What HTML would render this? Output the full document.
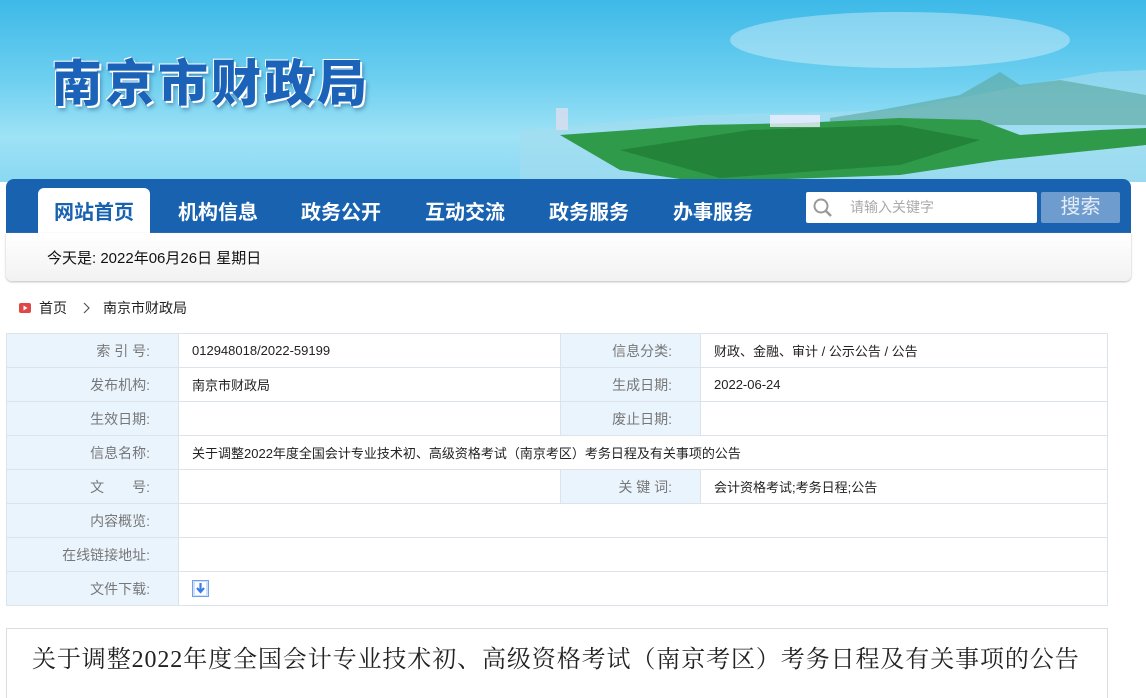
<!DOCTYPE html>
<html><head><meta charset="utf-8"><style>
*{margin:0;padding:0;box-sizing:border-box}
body{width:1146px;height:688px;overflow:hidden;background:#fff;font-family:"Liberation Sans","Noto Sans CJK SC",sans-serif;position:relative}
.banner{position:absolute;left:0;top:0;width:1146px;height:182px;background:linear-gradient(180deg,#3db9e8 0%,#6fd0f0 45%,#9ee2f6 75%,#8ad8f2 100%);overflow:hidden}
.logo{position:absolute;left:52px;top:44px;font-family:"Noto Sans CJK SC",sans-serif;font-weight:900;font-size:50px;color:#1b63b8;letter-spacing:3px;text-shadow:2px 2px 0 #fff,-1px -1px 0 #fff,3px 4px 4px rgba(0,40,100,.4)}
.nav{position:absolute;left:6px;top:179px;width:1125px;height:54px;background:#1862b0;border-radius:8px 8px 0 0}
.nav span{position:absolute;top:20px;color:#fff;font-weight:bold;font-size:20px;font-family:"Noto Sans CJK SC",sans-serif;line-height:24px}
.tab{position:absolute;left:32px;top:9px;width:112px;height:45px;background:#fff;border-radius:6px 6px 0 0}
.sub{position:absolute;left:6px;top:233px;width:1125px;height:48px;background:linear-gradient(#fff,#f2f2f2);border-radius:0 0 6px 6px;box-shadow:0 1px 2px #bbb}
.sub div{position:absolute;left:41px;top:14px;font-size:15px;color:#111}
.search{position:absolute;left:800px;top:13px;width:231px;height:31px;background:#fff;border-radius:2px}
.btn{position:absolute;left:1035px;top:13px;width:79px;height:31px;background:#6f9ccf;border-radius:2px;color:#e6eef8;font-size:20px;text-align:center;line-height:31px}
.crumb{position:absolute;top:298px;font-size:14px;color:#222}
table{position:absolute;left:6px;top:333px;border-collapse:collapse;width:1102px}
td{border:1px solid #dde3ea;height:34px;font-size:13px;color:#222;padding-left:13px}
td.l{background:#eaf4fd;color:#777;text-align:right;padding-right:28px;padding-left:0;font-size:14px}
.title{position:absolute;left:6px;top:628px;width:1102px;height:70px;border:1px solid #ddd;border-bottom:none}
.title div{position:absolute;left:25px;top:10px;font-family:"Liberation Serif","Noto Serif CJK SC",serif;font-size:24px;letter-spacing:0.9px;color:#222;white-space:nowrap}
</style></head><body>
<div class="banner">
<svg width="1146" height="182" style="position:absolute;left:0;top:0">
<ellipse cx="900" cy="40" rx="170" ry="28" fill="#fff" opacity=".35"/>
<path d="M520 130 L700 115 L900 110 L1000 90 L1100 72 L1146 70 L1146 182 L520 182Z" fill="#a5dcef" opacity=".6"/>
<path d="M830 118 L880 110 L960 95 L1000 72 L1020 85 L1060 80 L1146 95 L1146 125 L830 125Z" fill="#5aa59b" opacity=".6"/>
<path d="M560 135 L700 125 L800 123 L900 118 L980 120 L1020 135 L1100 130 L1146 128 L1146 145 L1000 160 L900 175 L700 182 L620 170Z" fill="#2f9a4a"/>
<path d="M620 150 L750 130 L900 125 L980 140 L900 165 L720 178Z" fill="#1f7d35" opacity=".8"/>
<rect x="770" y="115" width="50" height="12" fill="#eef" opacity=".8"/>
<rect x="556" y="108" width="12" height="22" fill="#dde" opacity=".8"/>
</svg>
<div class="logo">南京市财政局</div>
</div>
<div class="nav">
<div class="tab"></div>
<span style="left:48px;color:#1862b0">网站首页</span>
<span style="left:172px">机构信息</span>
<span style="left:295px">政务公开</span>
<span style="left:419px">互动交流</span>
<span style="left:543px">政务服务</span>
<span style="left:667px">办事服务</span>
<div class="search"><svg width="22" height="22" style="position:absolute;left:6px;top:5px"><circle cx="9" cy="9" r="6.5" fill="none" stroke="#999" stroke-width="2"/><line x1="14" y1="14" x2="19" y2="19" stroke="#999" stroke-width="2.5"/></svg><span style="position:absolute;left:44px;top:7px;font-size:14px;color:#aaa;font-weight:normal;font-family:'Liberation Sans','Noto Sans CJK SC',sans-serif;line-height:16px">请输入关键字</span></div>
<div class="btn">搜索</div>
</div>
<div class="sub"><div>今天是: 2022年06月26日 星期日</div></div>
<svg width="12" height="10" style="position:absolute;left:19px;top:303px"><rect width="12" height="10" rx="2" fill="#e04848"/><path d="M4.5 2.5 L8.5 5 L4.5 7.5Z" fill="#fff"/></svg>
<div class="crumb" style="left:39px">首页</div>
<svg width="8" height="12" style="position:absolute;left:82px;top:302px"><path d="M2 1 L7 6 L2 11" stroke="#555" fill="none" stroke-width="1.2"/></svg>
<div class="crumb" style="left:103px">南京市财政局</div>
<table>
<tr><td class="l" style="width:172px">索 引 号:</td><td style="width:382px">012948018/2022-59199</td><td class="l" style="width:140px">信息分类:</td><td>财政、金融、审计 / 公示公告 / 公告</td></tr>
<tr><td class="l">发布机构:</td><td>南京市财政局</td><td class="l">生成日期:</td><td>2022-06-24</td></tr>
<tr><td class="l">生效日期:</td><td></td><td class="l">废止日期:</td><td></td></tr>
<tr><td class="l">信息名称:</td><td colspan="3">关于调整2022年度全国会计专业技术初、高级资格考试（南京考区）考务日程及有关事项的公告</td></tr>
<tr><td class="l">文　　号:</td><td></td><td class="l">关 键 词:</td><td>会计资格考试;考务日程;公告</td></tr>
<tr><td class="l">内容概览:</td><td colspan="3"></td></tr>
<tr><td class="l">在线链接地址:</td><td colspan="3"></td></tr>
<tr><td class="l">文件下载:</td><td colspan="3"><svg width="17" height="17" style="vertical-align:middle"><rect x="0.5" y="0.5" width="16" height="16" fill="#cfe0fb" stroke="#6fa0f0"/><rect x="3" y="2" width="11" height="13" fill="#fff"/><path d="M8.5 3 V11 M5 8 L8.5 12 L12 8" stroke="#3a7de8" stroke-width="2.2" fill="none"/></svg></td></tr>
</table>
<div class="title"><div>关于调整2022年度全国会计专业技术初、高级资格考试（南京考区）考务日程及有关事项的公告</div></div>
</body></html>
